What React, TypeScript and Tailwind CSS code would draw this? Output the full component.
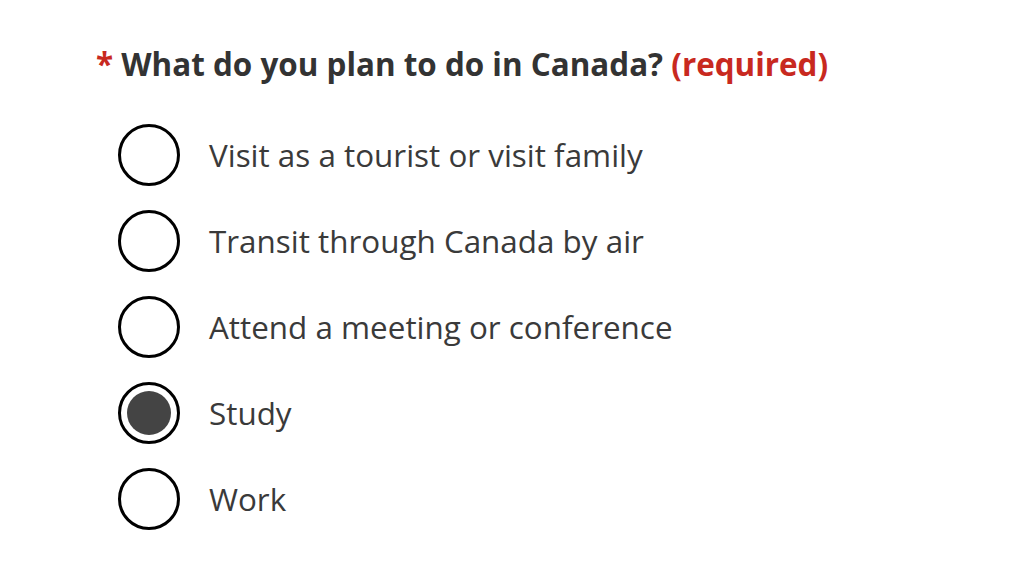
import { useState } from 'react';

const options = [
  'Visit as a tourist or visit family',
  'Transit through Canada by air',
  'Attend a meeting or conference',
  'Study',
  'Work',
];

export default function App() {
  const [selected, setSelected] = useState('Study');

  return (
    <div className="w-[1024px] h-[576px] bg-white font-['Open_Sans',sans-serif] text-[#333333] pt-[42px] pl-[96px]">
      <div role="radiogroup" aria-labelledby="plan-label">
        <h2 id="plan-label" className="text-[31.4px] font-bold leading-[44px]">
          <span className="text-[#c8291f]">* </span>
          What do you plan to do in Canada? <span className="text-[#c8291f]">(required)</span>
        </h2>
        <div className="flex flex-col gap-[24px] mt-[38px] pl-[22px]">
          {options.map(opt => (
            <label key={opt} className="flex items-center gap-[29px] cursor-pointer">
              <input
                type="radio"
                name="plan"
                className="sr-only"
                checked={selected === opt}
                onChange={() => setSelected(opt)}
              />
              <span className="w-[62px] h-[62px] rounded-full border-[3px] border-black flex items-center justify-center shrink-0">
                {selected === opt && <span className="w-[44px] h-[44px] rounded-full bg-[#444444]" />}
              </span>
              <span className="text-[31.4px] leading-[60px] text-[#3a3a3a]">{opt}</span>
            </label>
          ))}
        </div>
      </div>
    </div>
  );
}
